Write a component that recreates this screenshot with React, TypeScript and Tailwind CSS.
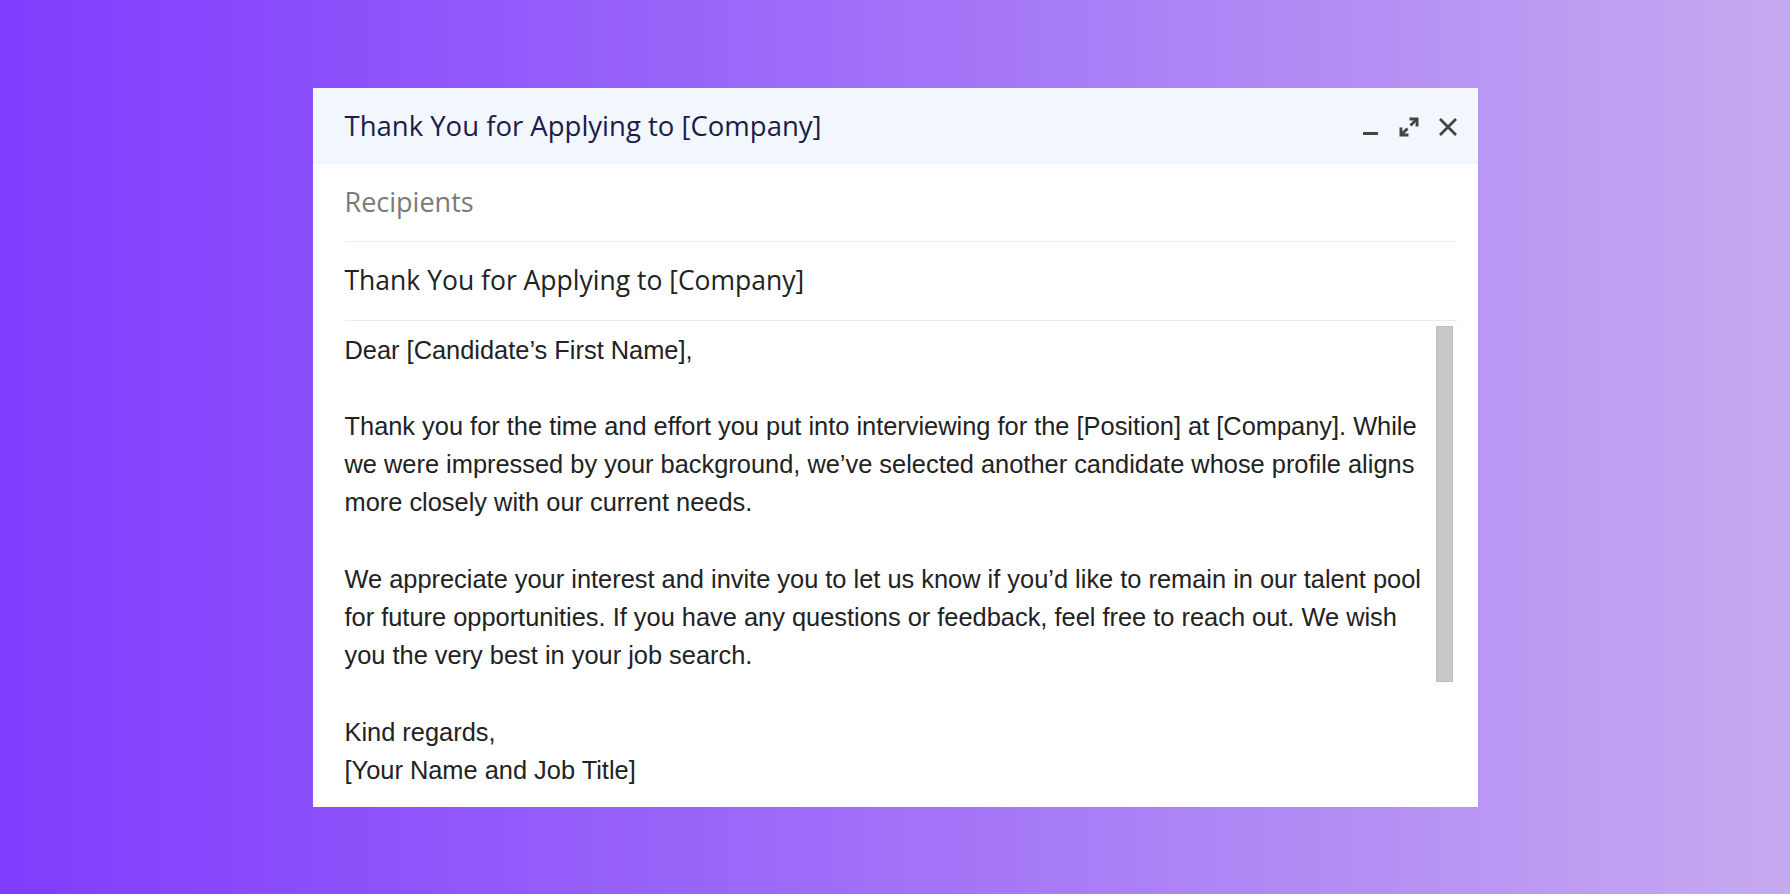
import React from "react";

const bodyFont = { fontFamily: '"Liberation Sans", Arial, sans-serif' };
const uiFont = { fontFamily: '"Open Sans", Roboto, sans-serif' };

function Minimize() {
  return (
    <svg width="18" height="18" viewBox="0 0 18 18" className="text-[#444]">
      <rect x="1" y="14" width="15" height="3" fill="currentColor" />
    </svg>
  );
}
function Maximize() {
  return (
    <svg width="22" height="22" viewBox="0 0 22 22" className="text-[#444]">
      <path d="M11.5 1.5H20.5V10.5L17.6 10.5L17.6 4.4L11.5 4.4Z" fill="currentColor" />
      <path d="M19 3L12.5 9.5" stroke="currentColor" strokeWidth="2.8" fill="none" />
      <path d="M10.5 20.5H1.5V11.5L4.4 11.5L4.4 17.6L10.5 17.6Z" fill="currentColor" />
      <path d="M3 19L9.5 12.5" stroke="currentColor" strokeWidth="2.8" fill="none" />
    </svg>
  );
}
function Close() {
  return (
    <svg width="20" height="20" viewBox="0 0 20 20" fill="none" stroke="currentColor" strokeWidth="2.8" className="text-[#444]">
      <path d="M2 2L18 18M18 2L2 18" />
    </svg>
  );
}

export default function App() {
  return (
    <div className="w-full h-[894px] flex items-center justify-center bg-[linear-gradient(90deg,#7f3cfd_0%,#a171f8_50%,#c6aaf0_100%)]">
      <div className="w-[1165px] h-[719px] bg-white flex flex-col overflow-hidden">
        <div className="h-[76px] shrink-0 bg-[#f2f6fd] flex items-center justify-between pl-[32px] pr-[20px]">
          <div className="text-[27.5px] text-[#1c1c4a]" style={uiFont}>
            Thank You for Applying to [Company]
          </div>
          <div className="flex items-center gap-[18px] pt-[2px]">
            <Minimize />
            <Maximize />
            <Close />
          </div>
        </div>
        <div className="pl-[32px] pr-[21px] flex flex-col">
          <div className="h-[78px] flex items-center border-b border-[#ececec] text-[27px] text-[#7a7a7a]" style={uiFont}>
            Recipients
          </div>
          <div className="h-[79px] flex items-center border-b border-[#ececec] text-[26.5px] text-[#222]" style={uiFont}>
            Thank You for Applying to [Company]
          </div>
        </div>
        <div className="flex-1 flex pl-[32px] pr-[25px] min-h-0">
          <div className="flex-1 pt-[10px] text-[25.4px] leading-[38.2px] text-[#222] whitespace-nowrap" style={bodyFont}>
            <div>Dear [Candidate’s First Name],</div>
            <div>&nbsp;</div>
            <div>Thank you for the time and effort you put into interviewing for the [Position] at [Company]. While</div>
            <div>we were impressed by your background, we’ve selected another candidate whose profile aligns</div>
            <div>more closely with our current needs.</div>
            <div>&nbsp;</div>
            <div>We appreciate your interest and invite you to let us know if you’d like to remain in our talent pool</div>
            <div>for future opportunities. If you have any questions or feedback, feel free to reach out. We wish</div>
            <div>you the very best in your job search.</div>
            <div>&nbsp;</div>
            <div>Kind regards,</div>
            <div>[Your Name and Job Title]</div>
          </div>
          <div className="w-[17px] shrink-0 pt-[5px]">
            <div className="h-[356px] bg-[#c9c8cb] border border-[#bdbcc0]" />
          </div>
        </div>
      </div>
    </div>
  );
}
